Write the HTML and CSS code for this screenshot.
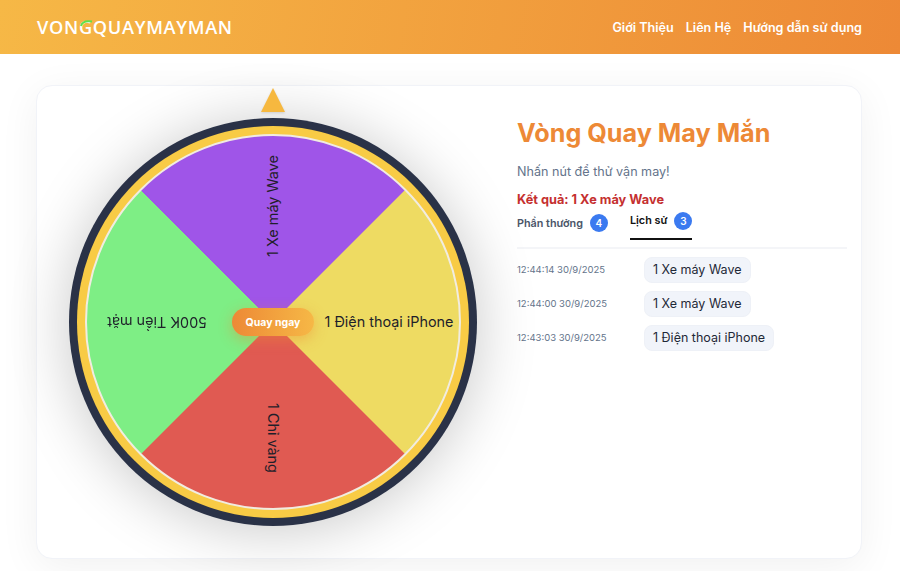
FILE: index.html
```html
<!DOCTYPE html>
<html lang="vi">
<head>
<meta charset="utf-8">
<title>Vòng Quay May Mắn</title>
<link rel="stylesheet" href="styles.css">
</head>
<body>
<header class="topbar">
  <a class="logo" href="#">
    VONGQUAYMAYMAN
    <svg class="logo-arc" width="14" height="8" viewBox="0 0 14 8"><path d="M1 7C2 3.5 6 1.5 12 2.6" fill="none" stroke="#5fe04a" stroke-width="2"/></svg>
  </a>
  <nav class="nav">
    <a href="#">Giới Thiệu</a>
    <a href="#">Liên Hệ</a>
    <a href="#">Hướng dẫn sử dụng</a>
  </nav>
</header>
<main class="page">
  <section class="card">
    <div class="wheel-col">
      <div class="pointer"></div>
      <div class="wheel">
        <div class="ring">
          <div class="disc">
            <span class="label label-right">1 Điện thoại iPhone</span>
            <span class="label label-bottom">1 Chỉ vàng</span>
            <span class="label label-left">500K Tiền mặt</span>
            <span class="label label-top">1 Xe máy Wave</span>
          </div>
        </div>
        <button class="spin">Quay ngay</button>
      </div>
    </div>
    <div class="info">
      <h1 class="title">Vòng Quay May Mắn</h1>
      <p class="hint">Nhấn nút để thử vận may!</p>
      <p class="result">Kết quả: 1 Xe máy Wave</p>
      <div class="tabs">
        <div class="tab">Phần thưởng <span class="badge">4</span></div>
        <div class="tab tab-active">Lịch sử <span class="badge">3</span></div>
      </div>
      <ul class="history">
        <li class="row"><span class="time">12:44:14 30/9/2025</span><span class="chip">1 Xe máy Wave</span></li>
        <li class="row"><span class="time">12:44:00 30/9/2025</span><span class="chip">1 Xe máy Wave</span></li>
        <li class="row"><span class="time">12:43:03 30/9/2025</span><span class="chip">1 Điện thoại iPhone</span></li>
      </ul>
    </div>
  </section>
</main>
</body>
</html>
```
FILE: styles.css
```css
* { box-sizing: border-box; }
html, body { margin: 0; height: 100%; }
body {
  font-family: Inter, "Liberation Sans", sans-serif;
  background: #fff;
  overflow: hidden;
}
a { text-decoration: none; color: inherit; }

.topbar {
  height: 54px;
  padding: 0 38px 0 37px;
  display: flex;
  align-items: center;
  justify-content: space-between;
  background: linear-gradient(100deg, #f6b846 0%, #ed8936 100%);
  color: #fff;
}
.logo {
  position: relative;
  font-family: "Open Sans", sans-serif;
  font-size: 18.2px;
  font-weight: 600;
  letter-spacing: 0.68px;
  line-height: 1;
}
.logo-arc { position: absolute; left: 43px; top: 1px; }
.nav { display: flex; gap: 12px; font-size: 12.6px; font-weight: 600; }

.page { padding: 31px 38px 0 36px; }
.card {
  height: 474px;
  padding: 32px 14px 32px 32px;
  display: flex;
  gap: 40px;
  background: #fff;
  border: 1px solid #f1f3f8;
  border-radius: 16px;
  box-shadow: 0 8px 40px rgba(0, 0, 0, .06);
}
.wheel-col { position: relative; flex: none; width: 408px; }
.pointer {
  position: absolute;
  z-index: 1;
  left: 192px;
  top: -30px;
  width: 0;
  height: 0;
  border-left: 12px solid transparent;
  border-right: 12px solid transparent;
  border-bottom: 24px solid #f6b83f;
  filter: drop-shadow(0 1px 1px rgba(0, 0, 0, .12));
}
.wheel {
  position: relative;
  width: 408px;
  height: 408px;
  border-radius: 50%;
  background: #2a3247;
  padding: 8px;
  box-shadow: 0 4px 60px rgba(0, 0, 0, .22);
}
.ring {
  width: 100%;
  height: 100%;
  border-radius: 50%;
  background: #f8cb45;
  padding: 8px;
}
.disc {
  position: relative;
  width: 100%;
  height: 100%;
  border-radius: 50%;
  border: 2px solid #f1ece0;
  background: conic-gradient(from -45deg, #9f55e8 0 89.9deg, #eedb62 90.1deg 179.9deg, #e05a52 180.1deg 269.9deg, #7eee85 270.1deg 359.9deg, #9f55e8 360deg);
  background-origin: border-box;
}
.label {
  position: absolute;
  left: 50%;
  top: 50%;
  width: 182px;
  height: 20px;
  margin-top: -10px;
  padding-left: 50px;
  text-align: center;
  font-size: 14.4px;
  line-height: 20px;
  color: #1f1f2a;
  white-space: nowrap;
  transform-origin: 0 50%;
}
.label-right { transform: rotate(0deg); }
.label-bottom { transform: rotate(90deg); }
.label-left { transform: rotate(180deg); }
.label-top { transform: rotate(270deg); }
.spin {
  position: absolute;
  left: 163px;
  top: 190px;
  width: 82px;
  height: 28px;
  border: 0;
  border-radius: 14px;
  background: linear-gradient(90deg, #ed8936, #f6b846);
  color: #fff;
  font: 700 10.5px Inter, sans-serif;
  box-shadow: 0 4px 14px rgba(237, 137, 54, .45);
}

.info { flex: 1; min-width: 0; }
.title { margin: 0; font-size: 25.2px; line-height: 30px; font-weight: 700; color: #ed8936; }
.hint { margin: 14px 0 0; font-size: 12.6px; line-height: 20px; color: #64748b; }
.result { margin: 8px 0 0; font-size: 12.75px; line-height: 20px; font-weight: 700; color: #c53030; }
.tabs { display: flex; gap: 22px; height: 39px; padding-top: 2px; border-bottom: 2px solid #f4f5f8; }
.tab {
  display: flex;
  align-items: flex-start;
  gap: 7px;
  height: 28px;
  font-size: 10.8px;
  line-height: 18px;
  font-weight: 600;
  color: #4a5568;
}
.tab-active {
  color: #111;
  border-bottom: 2px solid #111;
}
.badge {
  width: 18px;
  height: 18px;
  border-radius: 50%;
  background: #3b7af0;
  color: #fff;
  font-size: 10px;
  line-height: 18px;
  text-align: center;
}
.tab:first-child .badge { margin-top: 1px; }
.tab:first-child { padding-top: 1px; line-height: 22px; }
.history { list-style: none; margin: 8px 0 0; padding: 0; }
.row { display: flex; align-items: center; height: 26px; margin-bottom: 8px; }
.time { width: 127px; font-size: 9.5px; line-height: 25px; height: 26px; color: #64748b; }
.chip {
  padding: 0 8px;
  height: 26px;
  line-height: 24px;
  font-size: 12.5px;
  color: #1f2937;
  background: #f1f4fa;
  border: 1px solid #eef1f7;
  border-radius: 8px;
}
```
